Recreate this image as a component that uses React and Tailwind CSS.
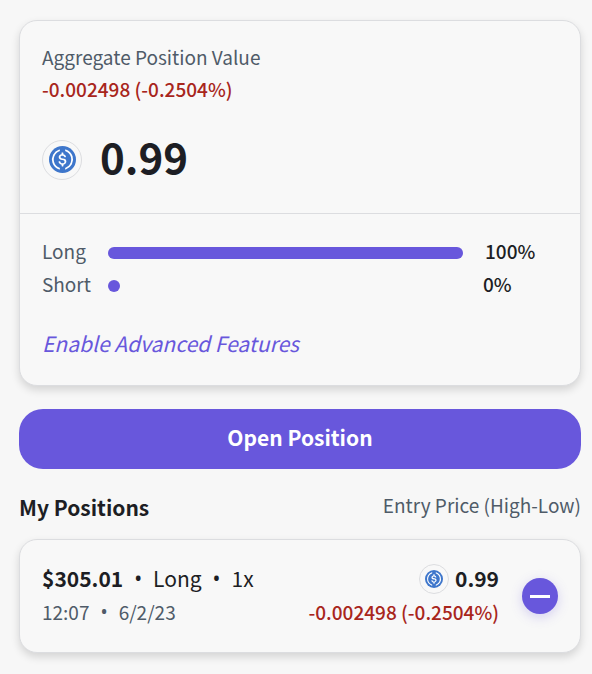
import React from "react";

function UsdcIcon({ className }) {
  return (
    <svg viewBox="0 0 32 32" className={className} aria-hidden="true">
      <circle cx="16" cy="16" r="16" fill="#3e76cb" />
      <g fill="#fff" transform="translate(16 16) scale(1.14) translate(-16 -16)">
        <path d="M20.022 18.124c0-2.124-1.28-2.852-3.84-3.156-1.828-.243-2.193-.728-2.193-1.578 0-.85.61-1.396 1.828-1.396 1.097 0 1.707.364 2.011 1.275a.458.458 0 00.427.303h.975a.416.416 0 00.427-.425v-.06a3.04 3.04 0 00-2.743-2.489V9.142c0-.243-.183-.425-.487-.486h-.915c-.243 0-.426.182-.487.486v1.396c-1.829.242-2.986 1.456-2.986 2.974 0 2.002 1.218 2.791 3.778 3.095 1.707.303 2.255.668 2.255 1.639 0 .97-.853 1.638-2.011 1.638-1.585 0-2.133-.667-2.316-1.578-.06-.242-.244-.364-.427-.364h-1.036a.416.416 0 00-.426.425v.06c.243 1.518 1.219 2.61 3.23 2.914v1.457c0 .242.183.425.487.485h.915c.243 0 .426-.182.487-.485V21.34c1.829-.303 3.047-1.578 3.047-3.217z" />
        <path d="M12.892 24.497c-4.754-1.7-7.192-6.98-5.424-11.653.914-2.55 2.925-4.491 5.424-5.402.244-.121.365-.303.365-.607v-.85c0-.242-.121-.424-.365-.485-.061 0-.183 0-.244.06a10.895 10.895 0 00-7.13 13.717c1.096 3.4 3.717 6.01 7.13 7.102.244.121.488 0 .548-.243.061-.06.061-.122.061-.243v-.85c0-.182-.182-.424-.365-.546zm6.46-18.936c-.244-.122-.488 0-.548.242-.061.061-.061.122-.061.243v.85c0 .243.182.485.365.607 4.754 1.7 7.192 6.98 5.424 11.653-.914 2.55-2.925 4.491-5.424 5.402-.244.121-.365.303-.365.607v.85c0 .242.121.424.365.485.061 0 .183 0 .244-.06a10.895 10.895 0 007.13-13.717c-1.096-3.46-3.778-6.07-7.13-7.162z" />
      </g>
    </svg>
  );
}

function Card({ children }) {
  return (
    <section className="rounded-[18px] border border-[#dcdde0] bg-[#f8f8f8] shadow-[0_4px_8px_rgba(0,0,0,0.14)]">
      {children}
    </section>
  );
}

function Dot() {
  return <span className="font-['Noto_Sans',sans-serif]">•</span>;
}

function Exposure({ label, percent }) {
  return (
    <div className="flex h-8 items-center">
      <span className="w-[66px] pb-1 text-[#4f5b68]">{label}</span>
      <div className="flex-1">
        <div
          className="h-3 min-w-3 rounded-full bg-[#6857dc]"
          style={{ width: `${percent}%` }}
        />
      </div>
      <span className={`${percent === 100 ? "ml-[22px] w-[73px]" : "ml-5 w-[75px]"} pb-1 font-medium`}>{percent}%</span>
    </div>
  );
}

export default function App() {
  return (
    <main className="min-h-screen bg-[#f7f7f7] pt-5 pr-[11px] pb-5 pl-[19px] font-['Noto_Sans_CJK_SC','Noto_Sans',sans-serif] text-[19px] leading-8 text-[#1d1e24]">
      <Card>
        <div className="border-b border-[#dcdde0] px-[22px] pt-5 pb-[23px]">
          <h1 className="text-[#4f5b68]">Aggregate Position Value</h1>
          <p className="font-medium text-[#a8261c]">-0.002498 (-0.2504%)</p>
          <div className="mt-6 flex h-[61px] items-center gap-[18px]">
            <span className="flex size-10 items-center justify-center rounded-full border border-[#dcdde0]">
              <UsdcIcon className="size-[27px]" />
            </span>
            <span className="pb-2 text-[42px] leading-[52px] font-bold">0.99</span>
          </div>
        </div>
        <div className="px-[22px] pt-[23px] pb-[25px]">
          <div className="flex flex-col gap-px">
            <Exposure label="Long" percent={100} />
            <Exposure label="Short" percent={0} />
          </div>
          <a href="#advanced" className="mt-[25px] inline-block text-[21px] text-[#6857dc] italic">
            Enable Advanced Features
          </a>
        </div>
      </Card>
      <button
        type="button"
        className="mt-[23px] h-[60px] w-full rounded-3xl bg-[#6857dc] pb-1 text-[21px] font-bold text-white"
      >
        Open Position
      </button>
      <div className="mt-5 flex items-center justify-between">
        <h2 className="text-[21px] font-bold">My Positions</h2>
        <button type="button" className="pb-[3px] text-[#4f5b68]">Entry Price (High-Low)</button>
      </div>
      <div className="mt-[15px]">
        <Card>
          <div className="flex items-center px-[22px] py-[22px]">
            <div className="flex-1">
              <p className="flex h-[34px] items-center gap-[11px] pb-[3px] text-[21px]">
                <span className="font-bold">$305.01</span>
                <Dot />
                <span>Long</span>
                <Dot />
                <span>1x</span>
              </p>
              <p className="flex h-[34px] items-center gap-[11px] pb-[3px] text-[#4f5b68]">
                <span>12:07</span>
                <Dot />
                <span>6/2/23</span>
              </p>
            </div>
            <div className="text-right font-medium">
              <p className="flex h-[34px] items-center justify-end gap-1.5 text-[21px]">
                <span className="flex size-[30px] items-center justify-center rounded-full border border-[#dcdde0]">
                  <UsdcIcon className="size-[18px]" />
                </span>
                <span className="pb-[3px] font-bold">0.99</span>
              </p>
              <p className="flex h-[34px] items-center pb-[3px] text-[#a8261c]">-0.002498 (-0.2504%)</p>
            </div>
            <button
              type="button"
              aria-label="Close position"
              className="ml-[23px] flex size-9 items-center justify-center rounded-full bg-[#6857dc] shadow-[0_3px_12px_rgba(104,87,220,0.25)]"
            >
              <span className="h-[3px] w-5 bg-white" />
            </button>
          </div>
        </Card>
      </div>
    </main>
  );
}
